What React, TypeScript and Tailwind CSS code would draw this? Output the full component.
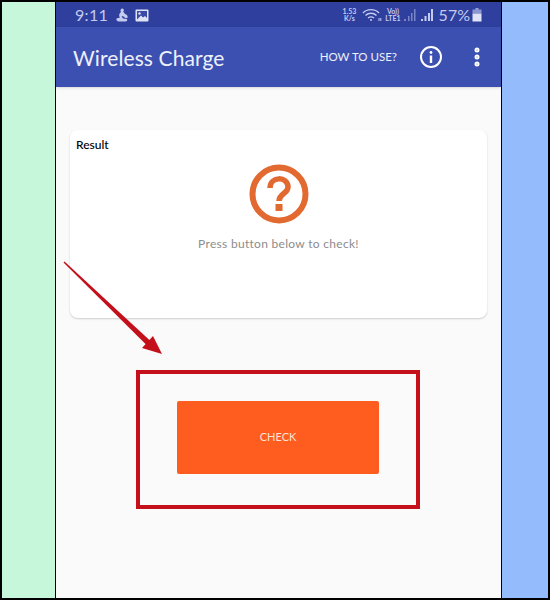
import { MoreVertical } from "lucide-react";

function StatusIcons() {
  return (
    <div className="flex items-center text-[#c3cbf0]">
      <div className="mr-[6px] flex flex-col items-center text-[7px] font-bold leading-[7px]">
        <span>1.53</span>
        <span>K/s</span>
      </div>
      <svg width="20" height="14" viewBox="0 0 20 14" fill="none" stroke="currentColor" strokeWidth="1.4" className="mr-[3px]">
        <path d="M1 5 C5 0.5 13 0.5 17 5" />
        <path d="M3.5 7.5 C6.5 4.5 11.5 4.5 14.5 7.5" />
        <path d="M6 10 C8 8.5 10 8.5 12 10" />
        <circle cx="9" cy="12" r="1" fill="currentColor" stroke="none" />
        <path d="M17 10 v3 M18.8 13 v-3" strokeWidth="1" />
      </svg>
      <div className="mr-[2px] flex flex-col items-center text-[7px] font-bold leading-[7px]">
        <span>Vo))</span>
        <span>LTE1</span>
      </div>
      <svg width="14" height="14" viewBox="0 0 14 14" fill="currentColor" className="mr-[3px] opacity-50">
        <rect x="1" y="11" width="2" height="2" />
        <rect x="5" y="8" width="1.5" height="5" />
        <rect x="8" y="5" width="1.5" height="8" />
        <rect x="11" y="1" width="1.5" height="12" />
      </svg>
      <svg width="14" height="14" viewBox="0 0 14 14" fill="currentColor" className="mr-[5px]">
        <rect x="1" y="11" width="2" height="2" />
        <rect x="4.5" y="8" width="2" height="5" />
        <rect x="8" y="5" width="2" height="8" />
        <rect x="11" y="1" width="2" height="12" />
      </svg>
      <span className="text-[16px] leading-none">57%</span>
      <svg width="10" height="14" viewBox="0 0 10 14" className="ml-[2px]">
        <rect x="3.5" y="0" width="3" height="2" fill="#9aa5dc" />
        <rect x="0.5" y="1.5" width="9" height="4" fill="#8c97d2" />
        <rect x="0.5" y="5.5" width="9" height="8" fill="#dfe3f5" />
      </svg>
    </div>
  );
}

function AppBar() {
  return (
    <div className="flex h-[60px] shrink-0 items-center bg-[#3c50b1] pl-[17px] pr-[12px] text-white shadow-sm">
      <span className="text-[21px] leading-none tracking-[0.1px] text-[#eef0fa]">Wireless Charge</span>
      <span className="ml-auto text-[11.5px] text-[#eef0fa]">HOW TO USE?</span>
      <svg width="24" height="24" viewBox="0 0 24 24" fill="none" className="ml-[22px]">
        <circle cx="12" cy="12" r="10" stroke="white" strokeWidth="2" />
        <circle cx="12" cy="7.5" r="1.4" fill="white" />
        <rect x="10.8" y="10.5" width="2.4" height="7.5" fill="white" />
      </svg>
      <MoreVertical size={24} strokeWidth={3} className="ml-[22px] text-white" />
    </div>
  );
}

export default function App() {
  return (
    <div className="relative flex h-[600px] w-[550px] overflow-hidden border-2 border-black bg-black font-['Lato',sans-serif]">
      <div className="w-[53px] shrink-0 bg-[#c6f7da]" />
      <div className="ml-px flex w-[445px] shrink-0 flex-col bg-[#fafafa]">
        <div className="flex h-[25px] shrink-0 items-center justify-between bg-[#2f3f9e] pl-[19px] pr-[19px] pt-[1px]">
          <div className="flex items-center text-[#c3cbf0]">
            <span className="text-[16px] leading-none tracking-[0.3px]">9:11</span>
            <svg width="14" height="14" viewBox="0 0 14 14" fill="currentColor" className="ml-[7px]">
              <path d="M7 0.5 C9 0.5 9.5 2.5 8.2 3.6 L10 6 C12 6.5 13 8 12.5 10 L10 10 C9.5 8.5 8 8 6.5 8.2 L8 10.5 L12 11 C12.5 12 12 13.5 10.5 13.5 L4 13.5 C2 13.5 1 12 1.5 10.5 L5 9.5 C3.5 8 4 5.5 6 4 C5 3 5.5 0.5 7 0.5 Z" />
            </svg>
            <svg width="14" height="13" viewBox="0 0 14 13" className="ml-[6px]">
              <rect x="0.5" y="0.5" width="13" height="12" rx="1" fill="#dfe3f5" />
              <rect x="2" y="2" width="10" height="9" fill="#3b4aa6" />
              <circle cx="4.5" cy="4.5" r="1.2" fill="#dfe3f5" />
              <path d="M2 10.5 L6 6.5 L8 8.5 L10 7 L12 9 V11 H2 Z" fill="#dfe3f5" />
            </svg>
          </div>
          <StatusIcons />
        </div>
        <AppBar />
        <div className="flex flex-1 flex-col items-center px-[14px] pt-[43px]">
          <div className="flex h-[188px] w-full flex-col rounded-[8px] bg-white px-[6px] pt-[7px] shadow-[0_1px_2px_rgba(0,0,0,0.18)]">
            <span className="self-start text-[12px] font-medium leading-[16px] text-black">Result</span>
            <svg width="60" height="60" viewBox="0 0 60 60" fill="none" className="mt-[11px] self-center">
              <circle cx="30" cy="30" r="26.5" stroke="#e2692f" strokeWidth="6" />
              <path d="M21 24 C21 12 39 12 39 23 C39 30 30 29 30 37" stroke="#e2692f" strokeWidth="5.5" />
              <rect x="26.5" y="40" width="7" height="7" fill="#e2692f" />
            </svg>
            <span className="mt-[11px] self-center text-[12px] tracking-[0.3px] text-[#8c8c8c]">Press button below to check!</span>
          </div>
          <div className="mr-px mt-[52px] border-[4px] border-[#c3101a] pb-[31px] pl-[37px] pr-[37px] pt-[27px]">
            <button className="flex h-[73px] w-[202px] items-center justify-center rounded-[2px] bg-[#ff5c1f] text-[11px] text-[#fbe3d3]">
              CHECK
            </button>
          </div>
        </div>
      </div>
      <div className="ml-px flex-1 bg-[#94bbfb]" />
      <svg width="110" height="100" viewBox="0 0 110 100" className="absolute left-[60px] top-[259px]">
        <polygon points="2.5,0.5 1.5,1.5 84.5,84 88.5,80" fill="#c3101a" />
        <polygon points="100,93 80,87 91,75" fill="#c3101a" />
      </svg>
    </div>
  );
}
